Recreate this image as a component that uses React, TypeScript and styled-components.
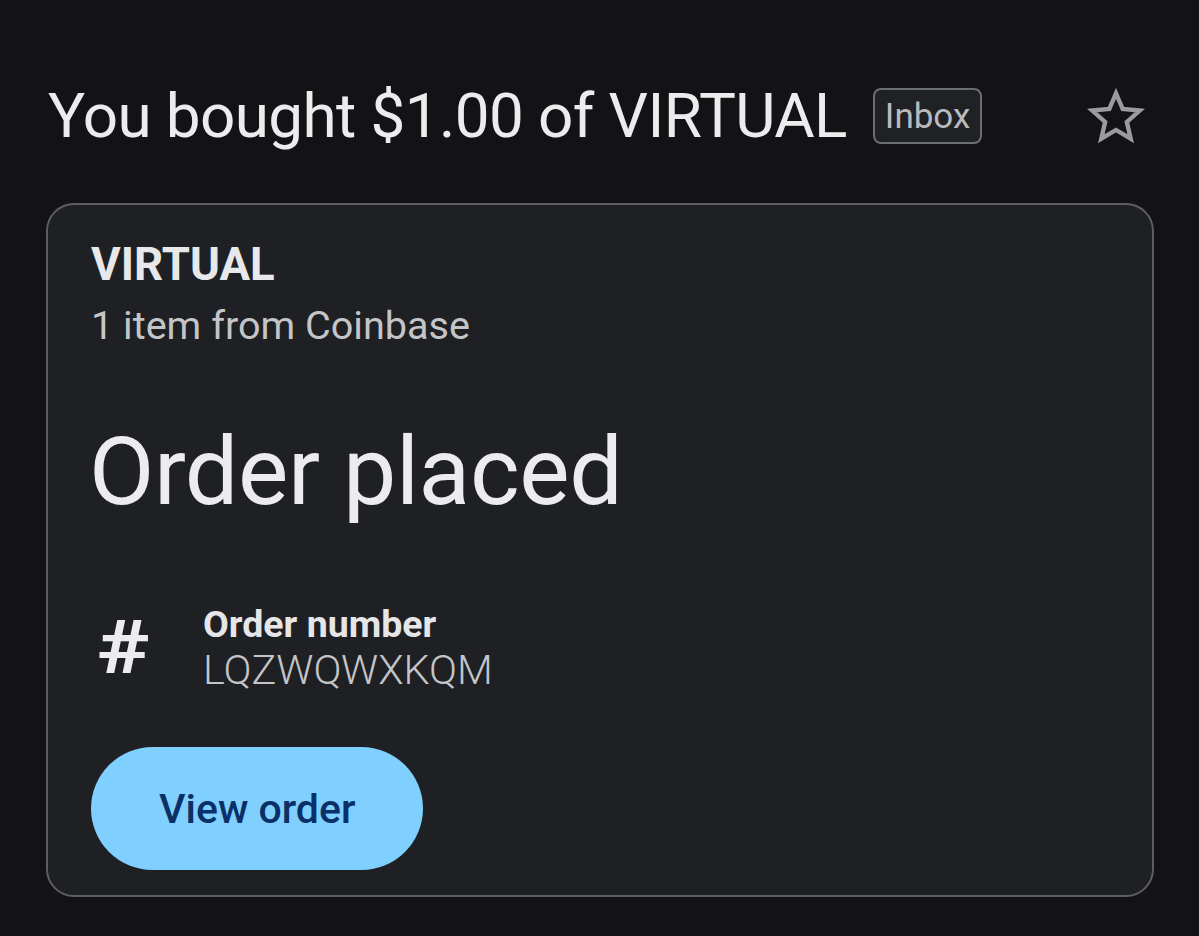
import React from "react";
import styled, { createGlobalStyle } from "styled-components";

const GlobalStyle = createGlobalStyle`
  html, body {
    margin: 0;
    padding: 0;
    background: #131315;
  }
  body {
    font-family: Roboto, "Noto Sans", sans-serif;
    color: #e6e6e8;
  }
`;

const Page = styled.div`
  width: 1199px;
  height: 936px;
  box-sizing: border-box;
  padding: 78px 45px 0 46px;
  overflow: hidden;
`;

const Header = styled.div`
  display: flex;
  align-items: center;
  height: 76px;
  padding-left: 2px;
`;

const Subject = styled.h1`
  margin: 0;
  font-size: 62px;
  font-weight: 400;
  line-height: 76px;
  letter-spacing: -0.6px;
  color: #ececee;
  white-space: nowrap;
`;

const Label = styled.span`
  margin-left: 26px;
  display: inline-flex;
  align-items: center;
  height: 52px;
  padding: 0 10px;
  border: 2px solid #6c6d70;
  border-radius: 8px;
  background: #202124;
  color: #b9babd;
  font-size: 35px;
  line-height: 1;
`;

const StarButton = styled.button`
  margin-left: auto;
  margin-right: 7px;
  background: none;
  border: none;
  padding: 0;
  width: 62px;
  height: 62px;
  display: flex;
  align-items: center;
  justify-content: center;
`;

const Card = styled.section`
  margin-top: 49px;
  height: 694px;
  box-sizing: border-box;
  border: 2px solid #5d5e61;
  border-radius: 28px;
  background: #1f2023;
  padding: 32px 43px 0;
`;

const Brand = styled.div`
  font-size: 45.5px;
  font-weight: 700;
  line-height: 56px;
  color: #e8e8ea;
`;

const Meta = styled.div`
  margin-top: 8px;
  font-size: 39.6px;
  line-height: 50px;
  color: #c4c5c8;
`;

const Status = styled.div`
  margin-top: 66px;
  margin-left: -2px;
  font-size: 95px;
  font-weight: 400;
  line-height: 110px;
  letter-spacing: -0.4px;
  color: #ececee;
`;

const DetailRow = styled.div`
  margin-top: 75px;
  display: flex;
  align-items: center;
`;

const DetailIcon = styled.div`
  flex: 0 0 112px;
  padding-left: 5px;
  box-sizing: border-box;
  font-size: 74px;
  font-weight: 700;
  line-height: 1;
  color: #ececee;
  transform: scaleX(1.2);
  transform-origin: left center;
`;

const DetailText = styled.div`
  display: flex;
  flex-direction: column;
`;

const DetailLabel = styled.span`
  font-size: 37.5px;
  font-weight: 700;
  line-height: 44px;
  color: #e6e6e8;
`;

const DetailValue = styled.span`
  font-size: 41.4px;
  font-weight: 300;
  line-height: 48px;
  color: #c4c5c8;
`;

const PrimaryButton = styled.button`
  margin-top: 53px;
  height: 123px;
  padding: 0 68px;
  border: none;
  border-radius: 62px;
  background: #7fcfff;
  color: #0b3068;
  font-family: Roboto, "Noto Sans", sans-serif;
  font-size: 41px;
  font-weight: 500;
`;

const StarIcon = () => (
  <svg width="62" height="62" viewBox="0 0 24 24" fill="none">
    <path
      d="M12 3.2l2.6 6.1 6.6.6-5 4.4 1.5 6.5L12 17.4l-5.7 3.4 1.5-6.5-5-4.4 6.6-.6L12 3.2z"
      stroke="#9a9b9e"
      strokeWidth="1.7"
      strokeLinejoin="miter"
    />
  </svg>
);

export default function App() {
  return (
    <>
      <GlobalStyle />
      <Page>
        <Header>
          <Subject>You bought $1.00 of VIRTUAL</Subject>
          <Label>Inbox</Label>
          <StarButton aria-label="Star">
            <StarIcon />
          </StarButton>
        </Header>
        <Card>
          <Brand>VIRTUAL</Brand>
          <Meta>1 item from Coinbase</Meta>
          <Status>Order placed</Status>
          <DetailRow>
            <DetailIcon>#</DetailIcon>
            <DetailText>
              <DetailLabel>Order number</DetailLabel>
              <DetailValue>LQZWQWXKQM</DetailValue>
            </DetailText>
          </DetailRow>
          <PrimaryButton>View order</PrimaryButton>
        </Card>
      </Page>
    </>
  );
}
